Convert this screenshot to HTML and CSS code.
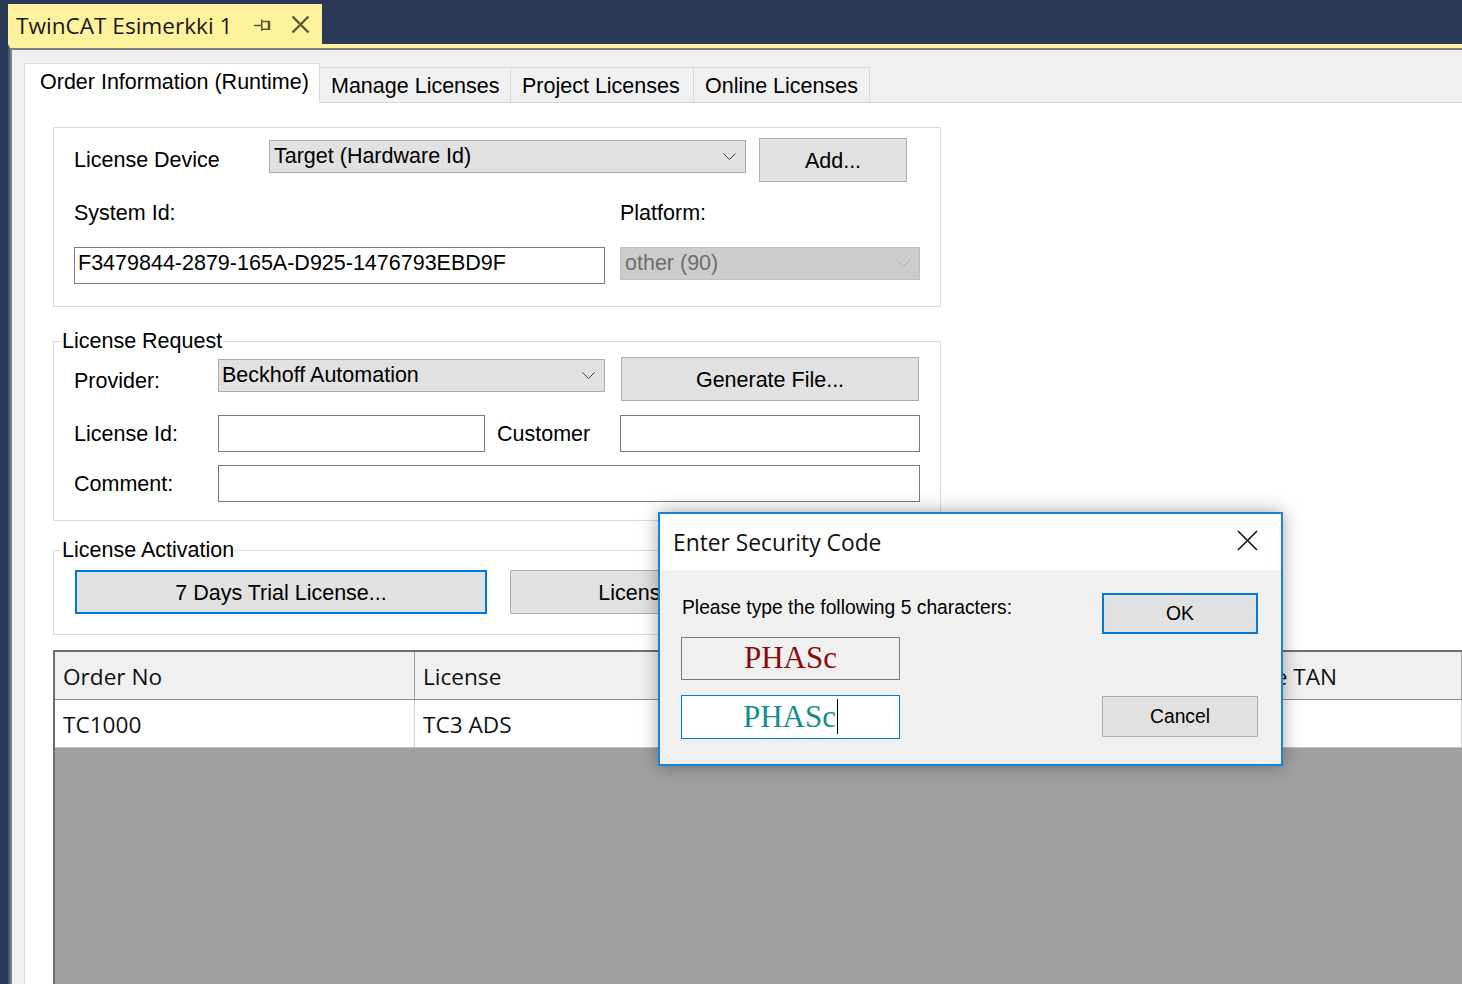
FILE: index.html
```html
<!DOCTYPE html>
<html>
<head>
<meta charset="utf-8">
<title>TwinCAT Esimerkki 1</title>
<link rel="stylesheet" href="styles.css">
</head>
<body>
<div class="ide">
  <div class="doc-tabs">
    <div class="doc-tab">
      <span class="doc-title">TwinCAT Esimerkki 1</span>
      <svg class="pin" width="18" height="14" viewBox="0 0 18 14"><path d="M0 7.5H7.5M7.75 1.5V13M8 3.5H15.5V11.25H8M14.5 3.5V11.25" stroke="#5f5733" stroke-width="1.5" fill="none"/></svg>
      <svg class="doc-close" width="19" height="19" viewBox="0 0 19 19"><path d="M1.5 1.5L17.5 17.5M17.5 1.5L1.5 17.5" stroke="#5f5733" stroke-width="2.4" fill="none"/></svg>
    </div>
  </div>
  <div class="doc-window">
    <div class="doc-body">
      <div class="tabstrip">
        <div class="tab active">Order Information (Runtime)</div>
        <div class="tab t-manage">Manage Licenses</div>
        <div class="tab t-project">Project Licenses</div>
        <div class="tab t-online">Online Licenses</div>
      </div>
      <div class="tabpanel">
        <div class="group device">
          <div class="row r1">
            <div class="lbl w195">License Device</div>
            <div class="combo c-target"><span>Target (Hardware Id)</span><svg class="chev" width="13" height="8" viewBox="0 0 13 8"><path d="M0.5 0.5L6.5 6.5L12.5 0.5" stroke="#3c3c3c" stroke-width="1" fill="none"/></svg></div>
            <div class="btn b-add">Add...</div>
          </div>
          <div class="row r2">
            <div class="lbl w546">System Id:</div>
            <div class="lbl">Platform:</div>
          </div>
          <div class="row r3">
            <div class="input i-sysid">F3479844-2879-165A-D925-1476793EBD9F</div>
            <div class="combo disabled c-platform"><span>other (90)</span><svg class="chev" width="13" height="8" viewBox="0 0 13 8"><path d="M0.5 0.5L6.5 6.5L12.5 0.5" stroke="#a8a8a8" stroke-width="1" fill="none"/></svg></div>
          </div>
        </div>

        <fieldset class="group request">
          <legend>License Request</legend>
          <div class="fs-body req-body">
            <div class="row q1">
              <div class="lbl w144 lbl-prov">Provider:</div>
              <div class="combo c-provider"><span>Beckhoff Automation</span><svg class="chev" width="13" height="8" viewBox="0 0 13 8"><path d="M0.5 0.5L6.5 6.5L12.5 0.5" stroke="#3c3c3c" stroke-width="1" fill="none"/></svg></div>
              <div class="btn b-gen">Generate File...</div>
            </div>
            <div class="row q2">
              <div class="lbl w144">License Id:</div>
              <div class="input i-licid"></div>
              <div class="lbl l-cust">Customer</div>
              <div class="input i-cust"></div>
            </div>
            <div class="row q3">
              <div class="lbl w144">Comment:</div>
              <div class="input i-comment"></div>
            </div>
          </div>
        </fieldset>

        <fieldset class="group activation">
          <legend>License Activation</legend>
          <div class="fs-body act-body">
            <div class="btn focused b-trial">7 Days Trial License...</div>
            <div class="btn b-resp">License Response File...</div>
          </div>
        </fieldset>

        <div class="grid">
          <div class="grow ghead">
            <div class="gcell">Order No</div>
            <div class="gcell">License</div>
            <div class="gcell">Expire Date (UTC)</div>
            <div class="gcell">Instances</div>
            <div class="gcell">License TAN</div>
          </div>
          <div class="grow gdata">
            <div class="gcell">TC1000</div>
            <div class="gcell">TC3 ADS</div>
            <div class="gcell"></div>
            <div class="gcell"></div>
            <div class="gcell"></div>
          </div>
        </div>
      </div>
    </div>
  </div>
</div>

<div class="dialog">
  <div class="dlg-title">
    <span>Enter Security Code</span>
    <svg class="dlg-close" width="21" height="21" viewBox="0 0 21 21"><path d="M1 1L20 20M20 1L1 20" stroke="#111" stroke-width="1.6" fill="none"/></svg>
  </div>
  <div class="dlg-body">
    <div class="dlg-left">
      <div class="dlg-text">Please type the following 5 characters:</div>
      <div class="captcha">PHASc</div>
      <div class="captcha-input"><span class="typed">PHASc</span><span class="caret"></span></div>
    </div>
    <div class="dlg-right">
      <div class="dbtn ok">OK</div>
      <div class="dbtn cancel">Cancel</div>
    </div>
  </div>
</div>
</body>
</html>
```
FILE: styles.css
```css
* { box-sizing: border-box; }

html, body {
  margin: 0;
  padding: 0;
}

body {
  width: 1462px;
  height: 984px;
  overflow: hidden;
  background: #2a3a56;
  font-family: "Liberation Sans", Arial, sans-serif;
  font-size: 21.5px;
  color: #000;
  position: relative;
}

.ide {
  display: flex;
  flex-direction: column;
  height: 984px;
}

/* document tab row */
.doc-tabs {
  height: 44px;
  padding: 4px 0 0 8px;
  flex: none;
}

.doc-tab {
  width: 314px;
  height: 40px;
  background: #fff29d;
  display: flex;
  align-items: center;
  padding: 4px 0 0 8px;
}

.doc-title {
  font-family: "Open Sans", "Noto Sans", sans-serif;
  font-size: 22.6px;
  line-height: 28px;
  color: #1a1a1a;
}

.pin {
  margin-left: 22px;
  margin-top: -2px;
}

.doc-close {
  margin-left: 19px;
  margin-top: -3px;
}

/* document window */
.doc-window {
  flex: 1;
  margin-left: 8px;
  border-top: 4px solid #fff29d;
  border-left: 2px solid #45587a;
  display: flex;
  flex-direction: column;
  min-height: 0;
}

.doc-body {
  flex: 1;
  background: #f0f0f0;
  border-top: 2px solid #7f7f7f;
  border-left: 2px solid #7f7f7f;
  padding: 13px 0 0 12px;
  display: flex;
  flex-direction: column;
  min-height: 0;
}

.tabstrip {
  display: flex;
  align-items: flex-end;
  height: 39px;
  flex: none;
}

.tab {
  height: 35px;
  background: #f0f0f0;
  border-top: 1px solid #d9d9d9;
  border-right: 1px solid #d9d9d9;
  padding: 3px 0 0 11px;
  display: flex;
  align-items: center;
  white-space: nowrap;
}

.tab.active {
  height: 40px;
  width: 296px;
  background: #fff;
  border: 1px solid #d9d9d9;
  border-bottom: 0;
  margin-bottom: -1px;
  padding: 0 0 2px 15px;
  position: relative;
  z-index: 1;
}

.t-manage { width: 191px; }
.t-project { width: 183px; }
.t-online { width: 176px; }

.tabpanel {
  flex: 1;
  background: #fff;
  border-top: 1px solid #d9d9d9;
  border-left: 1px solid #d9d9d9;
  padding: 24px 0 0 28px;
  display: flex;
  flex-direction: column;
  align-items: flex-start;
  min-height: 0;
  overflow: hidden;
}

/* group boxes */
.group {
  width: 888px;
  border: 1px solid #dcdcdc;
  flex: none;
}

.device {
  height: 180px;
  padding: 10px 0 0 20px;
}

.row {
  display: flex;
}

.lbl {
  line-height: 24px;
  white-space: nowrap;
}

.w195 { width: 195px; }
.w546 { width: 546px; }
.w144 { width: 144px; }

.r1 {
  height: 44px;
  align-items: center;
}

.r2 {
  margin-top: 19px;
}

.r3 {
  margin-top: 22px;
  align-items: flex-start;
}

.combo {
  height: 33px;
  background: #e1e1e1;
  border: 1px solid #adadad;
  display: flex;
  align-items: center;
  justify-content: space-between;
  padding: 0 9px 1px 4px;
  white-space: nowrap;
  line-height: 24px;
}

.combo .chev {
  margin-top: 1px;
}

.combo.disabled {
  background: #cccccc;
  border-color: #bfbfbf;
  color: #6d6d6d;
}

.c-target {
  width: 477px;
  align-self: flex-start;
  margin-top: 2px;
}

.c-platform {
  width: 300px;
  margin-left: 15px;
}

.c-provider {
  width: 387px;
  align-self: flex-start;
  margin-top: 2px;
  padding-left: 3px;
}

.btn {
  height: 44px;
  background: #e1e1e1;
  border: 1px solid #adadad;
  display: flex;
  align-items: center;
  justify-content: center;
  white-space: nowrap;
  line-height: 24px;
  padding-top: 1px;
}

.btn.focused {
  border: 2px solid #0078d7;
}

.b-add {
  width: 148px;
  margin-left: 13px;
}

.input {
  height: 37px;
  background: #fff;
  border: 1px solid #7a7a7a;
  padding: 3px 3px 0;
  line-height: 24px;
  white-space: nowrap;
}

.i-sysid { width: 531px; }

/* fieldsets */
fieldset.group {
  margin: 0;
  padding: 0;
  min-width: 0;
}

fieldset.group legend {
  margin-left: 7px;
  padding: 0 1px;
  line-height: 24px;
  font-size: 21.5px;
}

.request {
  margin-top: 22px !important;
}

.req-body {
  padding: 4px 0 18px 20px;
}

.q1 {
  height: 44px;
  align-items: flex-start;
}

.lbl-prov {
  padding-top: 12px;
}

.b-gen {
  width: 298px;
  margin-left: 16px;
}

.q2 {
  margin-top: 14px;
  align-items: center;
}

.q3 {
  margin-top: 13px;
  align-items: center;
}

.i-licid { width: 267px; }

.l-cust {
  width: 123px;
  margin-left: 12px;
}

.i-cust { width: 300px; }

.i-comment { width: 702px; }

.activation {
  margin-top: 17px !important;
}

.act-body {
  display: flex;
  padding: 8px 0 20px 21px;
}

.b-trial { width: 412px; }

.b-resp {
  width: 412px;
  margin-left: 23px;
}

/* data grid */
.grid {
  flex: 1;
  align-self: stretch;
  margin-top: 15px;
  background: #a0a0a0;
  border-top: 2px solid #6e6e6e;
  border-left: 2px solid #6e6e6e;
  font-family: "Open Sans", "Noto Sans", sans-serif;
  font-size: 22.6px;
}

.grow {
  display: grid;
  grid-template-columns: 360px 300px 250px 236px 1fr;
  height: 48px;
}

.ghead {
  background: #f0f0f0;
  border-bottom: 1px solid #8c8c8c;
}

.ghead .gcell {
  border-right: 1px solid #a0a0a0;
}

.gdata {
  background: #fff;
  border-bottom: 1px solid #c4c4c4;
}

.gdata .gcell {
  border-right: 1px solid #d4d4d4;
}

.gcell {
  display: flex;
  align-items: center;
  padding: 2px 0 0 8px;
  white-space: nowrap;
  color: #111;
}

/* security code dialog */
.dialog {
  position: absolute;
  left: 658px;
  top: 512px;
  width: 625px;
  height: 254px;
  border: 2px solid #1883d7;
  background: #f0f0f0;
  box-shadow: 0 0 18px rgba(0, 0, 0, 0.35);
  display: flex;
  flex-direction: column;
}

.dlg-title {
  height: 56px;
  background: #fff;
  display: flex;
  align-items: center;
  justify-content: space-between;
  padding: 0 23px 0 13px;
  font-family: "Open Sans", "Noto Sans", sans-serif;
  font-size: 22.8px;
  color: #111;
}

.dlg-close {
  margin-top: -3px;
}

.dlg-body {
  flex: 1;
  display: flex;
  justify-content: space-between;
  padding: 0 23px 0 21px;
  font-size: 19.3px;
}

.dlg-left {
  display: flex;
  flex-direction: column;
}

.dlg-text {
  margin: 26px 0 0 1px;
  line-height: 24px;
}

.captcha {
  margin-top: 17px;
  width: 219px;
  height: 43px;
  border: 1px solid #7a7a7a;
  background: #f0f0f0;
  display: flex;
  align-items: center;
  justify-content: center;
  font-family: "Liberation Serif", "Times New Roman", serif;
  font-size: 31px;
  line-height: 1;
  color: #8b0a0a;
  padding-bottom: 3px;
}

.captcha-input {
  margin-top: 15px;
  width: 219px;
  height: 44px;
  border: 1px solid #0078d7;
  background: #fff;
  display: flex;
  align-items: center;
  justify-content: center;
  font-family: "Liberation Serif", "Times New Roman", serif;
  font-size: 31px;
  line-height: 1;
  color: #138c8c;
  padding-bottom: 2px;
}

.caret {
  width: 1px;
  height: 35px;
  background: #000;
  margin-left: 1px;
}

.dlg-right {
  width: 156px;
  display: flex;
  flex-direction: column;
}

.dbtn {
  height: 41px;
  background: #e1e1e1;
  border: 1px solid #adadad;
  display: flex;
  align-items: center;
  justify-content: center;
  line-height: 24px;
}

.dbtn.ok {
  margin-top: 23px;
  border: 2px solid #0078d7;
}

.dbtn.cancel {
  margin-top: 62px;
}
```
